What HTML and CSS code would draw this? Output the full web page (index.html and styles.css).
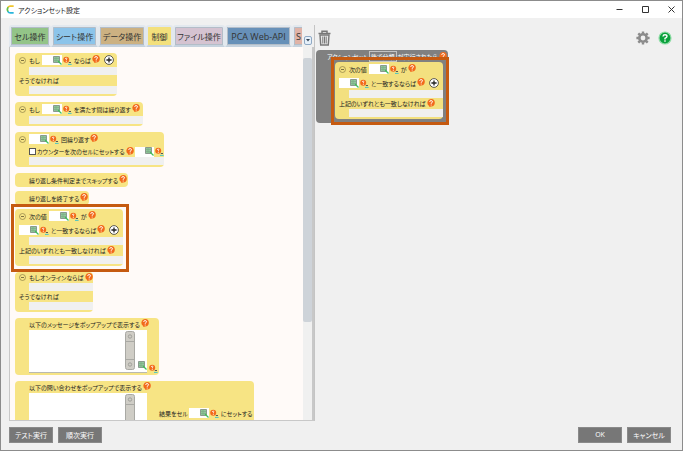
FILE: index.html
```
<!DOCTYPE html>
<html lang="ja">

<head>
    <meta charset="UTF-8">
    <meta name="viewport" content="width=device-width, initial-scale=1.0">
    <title>アクションセット設定</title>
    <link rel="stylesheet" href="styles.css">
</head>

<body>
    <svg class="defs" aria-hidden="true">
        <symbol id="help" viewBox="0 0 9 9">
            <path d="M4.5 0A4.2 4.2 0 0 1 8.8 4.2A4.2 4.2 0 0 1 4.6 8.3L2.6 9L2.5 7.8A4.2 4.2 0 0 1 4.5 0Z" fill="#f26a1b" />
            <path d="M3 3.2Q3.1 1.8 4.6 1.8Q6.2 1.8 6.2 3.1Q6.2 4 4.7 4.7V5.4M4.7 6.3V7.3" fill="none" stroke="#fff" stroke-width="1.1" />
        </symbol>
        <symbol id="type" viewBox="0 0 9 9">
            <circle cx="3.2" cy="3.8" r="3" fill="#f26a1b" />
            <path d="M2.2 3Q2.4 2.1 3.4 2.2Q4.6 2.5 3.4 3.7V4.3M3.3 5V5.8" fill="none" stroke="#fff" stroke-width=".9" />
            <path d="M5.8 6.5H8" stroke="#555" />
            <path d="M5 8.4H8.6" stroke="#48c5c5" />
        </symbol>
        <symbol id="pick" viewBox="0 0 9 9">
            <path d="M.5 .5H6.5V6.5H.5Z" fill="#8fc79a" stroke="#8a9a8e" />
            <path d="M1 2.5H6M1 4.5H6M3 1V6" stroke="#79a783" stroke-width=".6" />
            <path d="M5 5L8.5 8.5" stroke="#3fbf58" stroke-width="1.3" />
        </symbol>
        <symbol id="fold" viewBox="0 0 7 7">
            <circle cx="3.5" cy="3.5" r="3" fill="none" stroke="#8d8045" stroke-width=".7" />
            <path d="M2 3.5H5" stroke="#5f5630" stroke-width=".8" />
        </symbol>
        <symbol id="plus" viewBox="0 0 10 10">
            <circle cx="5" cy="5" r="4.4" fill="#fff" stroke="#333" stroke-width=".8" />
            <path d="M2.4 5H7.6M5 2.4V7.6" stroke="#222" stroke-width="1.3" />
        </symbol>
    </svg>

    <header class="titlebar">
        <svg class="logo" viewBox="0 0 10 10" aria-hidden="true">
            <path d="M8.5 1.2H4.5Q2.8 1.4 2 3" fill="none" stroke="#f0c52c" stroke-width="1.9" />
            <path d="M2.4 2.4Q.6 5 2.4 7.4" fill="none" stroke="#62c04a" stroke-width="1.9" />
            <path d="M2 7Q3 8.8 5 8.8H8.5" fill="none" stroke="#29b5dc" stroke-width="1.9" />
        </svg>
        <h1>アクションセット設定</h1>
        <div class="win-buttons">
            <button aria-label="最小化"><svg viewBox="0 0 7 7"><path d="M.5 3.5H6.5" /></svg></button>
            <button aria-label="最大化"><svg viewBox="0 0 7 7"><path d="M.5 .5H6.5V6.5H.5Z" /></svg></button>
            <button aria-label="閉じる"><svg viewBox="0 0 7 7"><path d="M.5 .5L6.5 6.5M6.5 .5L.5 6.5" /></svg></button>
        </div>
    </header>

    <main>
        <section class="palette">
            <nav class="tabs">
                <div class="tab-strip">
                    <button class="tab cell">セル操作</button>
                    <button class="tab sheet">シート操作</button>
                    <button class="tab data">データ操作</button>
                    <button class="tab control">制御</button>
                    <button class="tab file">ファイル操作</button>
                    <button class="tab api">PCA Web-API</button>
                    <button class="tab sql">S</button>
                </div>
                <button class="tab-more" aria-label="タブ一覧"><svg viewBox="0 0 4 3"><path d="M0 0H4L2 2.5Z" fill="#345" /></svg></button>
            </nav>

            <div class="list">
                <div class="blocks">
                    <div class="block b-if">
                        <div class="row">
                            <svg class="fold"><use href="#fold" /></svg>
                            <span>もし</span>
                            <span class="field"><input type="text" aria-label="条件"><svg><use href="#pick" /></svg></span>
                            <svg class="type"><use href="#type" /></svg>
                            <span>ならば</span>
                            <svg class="help"><use href="#help" /></svg>
                            <svg class="plus"><use href="#plus" /></svg>
                        </div>
                        <div class="slot"></div>
                        <div class="row low">そうでなければ</div>
                        <div class="slot"></div>
                    </div>

                    <div class="block b-while">
                        <div class="row">
                            <svg class="fold"><use href="#fold" /></svg>
                            <span>もし</span>
                            <span class="field"><input type="text" aria-label="繰り返し条件"><svg><use href="#pick" /></svg></span>
                            <svg class="type"><use href="#type" /></svg>
                            <span>を満たす間は繰り返す</span>
                            <svg class="help"><use href="#help" /></svg>
                        </div>
                        <div class="slot"></div>
                    </div>

                    <div class="block b-loop">
                        <div class="row">
                            <svg class="fold"><use href="#fold" /></svg>
                            <span class="field"><input type="text" aria-label="回数"><svg><use href="#pick" /></svg></span>
                            <svg class="type"><use href="#type" /></svg>
                            <span>回繰り返す</span>
                            <svg class="help"><use href="#help" /></svg>
                        </div>
                        <div class="row low indent">
                            <label><input type="checkbox">カウンターを次のセルにセットする</label>
                            <svg class="help"><use href="#help" /></svg>
                            <span class="field"><input type="text" aria-label="カウンターのセル"><svg><use href="#pick" /></svg></span>
                            <svg class="type"><use href="#type" /></svg>
                        </div>
                        <div class="slot"></div>
                    </div>

                    <div class="group">
                        <div class="block single b-skip">
                            <div class="row indent">繰り返し条件判定までスキップする<svg class="help"><use href="#help" /></svg></div>
                        </div>
                        <div class="block single b-break">
                            <div class="row indent">繰り返しを終了する<svg class="help"><use href="#help" /></svg></div>
                        </div>
                        <div class="block b-switch marked">
                            <div class="row">
                                <svg class="fold"><use href="#fold" /></svg>
                                <span>次の値</span>
                                <span class="field"><input type="text" aria-label="値"><svg><use href="#pick" /></svg></span>
                                <svg class="type"><use href="#type" /></svg>
                                <span>が</span>
                                <svg class="help"><use href="#help" /></svg>
                            </div>
                            <div class="row">
                                <span class="field"><input type="text" aria-label="比較する値"><svg><use href="#pick" /></svg></span>
                                <svg class="type"><use href="#type" /></svg>
                                <span>と一致するならば</span>
                                <svg class="help"><use href="#help" /></svg>
                                <svg class="plus"><use href="#plus" /></svg>
                            </div>
                            <div class="slot"></div>
                            <div class="row low">上記のいずれとも一致しなければ<svg class="help"><use href="#help" /></svg></div>
                            <div class="slot"></div>
                        </div>
                    </div>

                    <div class="block b-online">
                        <div class="row low">
                            <svg class="fold"><use href="#fold" /></svg>
                            <span>もしオンラインならば</span>
                            <svg class="help"><use href="#help" /></svg>
                        </div>
                        <div class="slot"></div>
                        <div class="row low">そうでなければ</div>
                        <div class="slot"></div>
                    </div>

                    <div class="block b-message">
                        <div class="row title">以下のメッセージをポップアップで表示する<svg class="help"><use href="#help" /></svg></div>
                        <div class="message">
                            <div class="memo">
                                <textarea aria-label="メッセージ"></textarea>
                                <svg class="bar" viewBox="0 0 10 39"><rect x=".5" y=".5" width="9" height="38" rx="2" fill="#cfcdc6" stroke="#a9a9a4" /><path d="M1 10.5H9M1 28.5H9" stroke="#a9a9a4" /><circle cx="5" cy="5.5" r="1.7" fill="none" stroke="#a0a09a" /><circle cx="5" cy="33.5" r="1.7" fill="none" stroke="#a0a09a" /></svg>
                                <svg class="pick"><use href="#pick" /></svg>
                            </div>
                            <svg class="type"><use href="#type" /></svg>
                        </div>
                    </div>

                    <div class="block b-question">
                        <div class="row title">以下の問い合わせをポップアップで表示する<svg class="help"><use href="#help" /></svg></div>
                        <div class="message">
                            <div class="memo">
                                <textarea aria-label="問い合わせ"></textarea>
                                <svg class="bar" viewBox="0 0 10 39"><rect x=".5" y=".5" width="9" height="38" rx="2" fill="#cfcdc6" stroke="#a9a9a4" /><path d="M1 10.5H9M1 28.5H9" stroke="#a9a9a4" /><circle cx="5" cy="5.5" r="1.7" fill="none" stroke="#a0a09a" /><circle cx="5" cy="33.5" r="1.7" fill="none" stroke="#a0a09a" /></svg>
                            </div>
                            <div class="result">
                                <span>結果をセル</span>
                                <span class="field"><input type="text" aria-label="結果のセル"><svg><use href="#pick" /></svg></span>
                                <svg class="type"><use href="#type" /></svg>
                                <span>にセットする</span>
                            </div>
                        </div>
                    </div>
                </div>
                <div class="scrollbar"><div class="thumb"></div></div>
            </div>
        </section>

        <section class="canvas">
            <div class="tools">
                <button aria-label="削除">
                    <svg class="trash" viewBox="0 0 13 16">
                        <path d="M.5 3.5H12.5M4 3V1.2H9V3" fill="none" stroke="#777" stroke-width="1.5" />
                        <path d="M2 5H11L10.3 15H2.7Z" fill="#e8e8e8" stroke="#777" stroke-width="1.4" />
                        <path d="M4.8 6.5V13.5M6.5 6.5V13.5M8.2 6.5V13.5" stroke="#777" />
                    </svg>
                </button>
                <span class="space"></span>
                <button aria-label="設定">
                    <svg class="gear" viewBox="0 0 14 14">
                        <circle cx="7" cy="7" r="3.7" fill="none" stroke="#8b8b8b" stroke-width="2.6" />
                        <path d="M7 .4V2.6M7 11.4V13.6M.4 7H2.6M11.4 7H13.6M2.3 2.3L3.9 3.9M10.1 10.1L11.7 11.7M2.3 11.7L3.9 10.1M10.1 3.9L11.7 2.3" stroke="#8b8b8b" stroke-width="2.4" />
                    </svg>
                </button>
                <button aria-label="ヘルプ">
                    <svg class="gear" viewBox="0 0 14 14">
                        <circle cx="7" cy="7" r="6" fill="#0aa13c" stroke="#8fdca6" stroke-width="1.2" />
                        <path d="M5 5.5Q5.1 3.7 7 3.7Q9 3.7 9 5.3Q9 6.4 7 7.3V8.4M7 9.3V10.8" fill="none" stroke="#fff" stroke-width="1.4" />
                    </svg>
                </button>
            </div>

            <div class="event">
                <div class="event-head">
                    <span>アクションセット</span>
                    <span class="event-name">後で分類</span>
                    <span>が実行されたら</span>
                    <svg class="help"><use href="#help" /></svg>
                </div>
                <div class="block b-switch marked">
                    <div class="row">
                        <svg class="fold"><use href="#fold" /></svg>
                        <span>次の値</span>
                        <span class="field"><input type="text" aria-label="値"><svg><use href="#pick" /></svg></span>
                        <svg class="type"><use href="#type" /></svg>
                        <span>が</span>
                        <svg class="help"><use href="#help" /></svg>
                    </div>
                    <div class="row">
                        <span class="field"><input type="text" aria-label="比較する値"><svg><use href="#pick" /></svg></span>
                        <svg class="type"><use href="#type" /></svg>
                        <span>と一致するならば</span>
                        <svg class="help"><use href="#help" /></svg>
                        <svg class="plus"><use href="#plus" /></svg>
                    </div>
                    <div class="slot"></div>
                    <div class="row low">上記のいずれとも一致しなければ<svg class="help"><use href="#help" /></svg></div>
                    <div class="slot"></div>
                </div>
            </div>
        </section>
    </main>

    <footer>
        <button>テスト実行</button>
        <button>順次実行</button>
        <span class="space"></span>
        <button>OK</button>
        <button>キャンセル</button>
    </footer>
</body>

</html>
```
FILE: styles.css
```
* {
    box-sizing: border-box;
}

body {
    margin: 0;
    height: 100vh;
    display: flex;
    flex-direction: column;
    border: 1px solid #8c8c8c;
    background-color: #f0f0f0;
    color: #222;
    font-family: "Open Sans", "Noto Sans CJK JP", sans-serif;
    font-size: 6px;
    font-feature-settings: "palt", "kern";
    white-space: nowrap;
}

button,
input,
textarea {
    margin: 0;
    padding: 0;
    border: none;
    background: none;
    font: inherit;
    font-feature-settings: inherit;
}

svg {
    display: block;
    flex: none;
}

.defs {
    position: absolute;
    width: 0;
    height: 0;
}

.space {
    flex: 1;
}

/* title bar */
.titlebar {
    display: flex;
    align-items: center;
    flex: none;
    height: 17px;
    padding: 0 7px 0 5px;
    gap: 3px;
    background-color: #fff;
}

.logo {
    width: 9px;
    height: 9px;
}

.titlebar h1 {
    flex: 1;
    margin: 0;
    font-size: 7px;
    font-weight: normal;
}

.win-buttons {
    display: flex;
    gap: 19px;
}

.win-buttons svg {
    width: 7px;
    height: 7px;
    fill: none;
    stroke: #333;
}

/* main */
main {
    flex: 1;
    display: flex;
    min-height: 0;
    padding: 7px 8px 0;
}

.palette {
    display: flex;
    flex-direction: column;
    width: 46%;
    border-right: 1px solid #c4c4c4;
}

.tabs {
    display: flex;
    align-items: flex-end;
    flex: none;
    height: 22px;
    gap: 2px;
}

.tab-strip {
    display: flex;
    flex: 1;
    min-width: 0;
    height: 22px;
    overflow: hidden;
}

.tab {
    flex: none;
    padding: 0 2px;
    border: 2px solid #e2e8ee;
    border-bottom-color: #c6d2de;
    border-radius: 3px 3px 0 0;
    box-shadow: inset 0 0 0 1px #b3bdc8;
    font-size: 8px;
    color: #333;
}

.cell {
    width: 42px;
    background-color: #93c488;
}

.sheet {
    width: 47px;
    background-color: #8cc4ea;
}

.data {
    width: 48px;
    background-color: #ccb182;
}

.control {
    width: 27px;
    background-color: #f3e07c;
    box-shadow: none;
}

.file {
    width: 52px;
    background-color: #d5c3d1;
}

.api {
    width: 67px;
    font-size: 9px;
    background-color: #6790b8;
}

.sql {
    width: 30px;
    text-align: left;
    font-size: 9px;
    background-color: #e0b3a7;
}

.tab-more {
    display: flex;
    align-items: center;
    justify-content: center;
    width: 8px;
    height: 9px;
    margin: 0 2px 2px 0;
    border: 1px solid #8fa9c4;
    border-radius: 2px;
    background-color: #e6f0fa;
}

.tab-more svg {
    width: 4px;
    height: 3px;
}

.list {
    flex: 1;
    display: flex;
    min-height: 0;
    border: solid #c8c8c8;
    border-width: 0 2px 1px 1px;
    background-color: #fffaf8;
}

.blocks {
    flex: 1;
    display: flex;
    flex-direction: column;
    align-items: flex-start;
    gap: 6px;
    padding: 6px 5px 0;
    overflow: hidden;
}

.scrollbar {
    width: 9px;
    padding-top: 11px;
    background-color: #f0f0f0;
}

.thumb {
    height: 73%;
    border-radius: 2px;
    background-color: #ced3d9;
}

/* blocks */
.block {
    flex: none;
    padding-bottom: 2px;
    border-radius: 4px;
    background-color: #f7e484;
}

.group {
    display: flex;
    flex-direction: column;
    align-items: flex-start;
    flex: none;
    gap: 4px;
}

.single {
    padding-bottom: 0;
}

.b-if {
    width: 102px;
}

.b-while {
    width: 128px;
}

.b-loop {
    width: 149px;
}

.b-skip {
    width: 113px;
}

.b-break {
    width: 74px;
}

.b-switch {
    width: 108px;
}

.b-online {
    width: 78px;
}

.b-message {
    width: 144px;
}

.b-question {
    width: 239px;
}

.row {
    display: flex;
    align-items: center;
    height: 14px;
    padding-left: 4px;
    gap: 1px;
}

.low {
    height: 11px;
}

.indent {
    padding-left: 14px;
}

.title {
    height: 12px;
    padding-left: 14px;
}

.slot {
    height: 8px;
    margin-left: 14px;
    background-color: #f0f0f0;
}

.row label {
    display: flex;
    align-items: center;
    gap: 1px;
}

.row input[type="checkbox"] {
    appearance: none;
    width: 7px;
    height: 7px;
    border: 1px solid #555;
    background-color: #fff;
}

.field {
    display: flex;
    align-items: center;
    width: 20px;
    height: 10px;
    background-color: #fff;
}

.row span + .field {
    margin-left: 1px;
}

.field input {
    flex: 1;
    width: 0;
    height: 10px;
}

.field svg,
.pick {
    width: 9px;
    height: 9px;
}

.fold {
    width: 7px;
    height: 7px;
    margin-right: 2px;
}

.type {
    width: 9px;
    height: 9px;
}

.type + span {
    margin-left: 1px;
}

.help {
    width: 8px;
    height: 8px;
}

.row .help {
    margin-bottom: 2px;
}

.plus {
    width: 10px;
    height: 10px;
    margin-left: 3px;
}

.message {
    display: flex;
    align-items: flex-end;
    gap: 2px;
    margin-left: 14px;
}

.memo {
    display: flex;
    align-items: flex-end;
    flex: none;
    width: 118px;
    height: 43px;
    padding: 2px 0;
    gap: 3px;
    border-bottom: 1px solid #b9b9b0;
    background-color: #fff;
}

.memo textarea {
    flex: 1;
    width: 0;
    height: 38px;
    resize: none;
}

.b-question .memo {
    padding-right: 12px;
}

.bar {
    width: 10px;
    height: 39px;
}

.result {
    display: flex;
    align-items: center;
    gap: 1px;
    margin-left: 10px;
    padding-bottom: 18px;
}

/* orange frame over the block */
.marked {
    position: relative;
}

.marked::after {
    content: "";
    position: absolute;
    inset: -5px -6px -6px -4px;
    border: 3px solid #c55a11;
}

/* canvas */
.canvas {
    flex: 1;
    display: flex;
    flex-direction: column;
    align-items: flex-start;
    padding-left: 1px;
}

.tools {
    display: flex;
    align-items: center;
    align-self: stretch;
    height: 25px;
    padding: 0 2px;
    gap: 8px;
}

.trash {
    width: 13px;
    height: 16px;
}

.gear {
    width: 14px;
    height: 14px;
}

.event {
    padding: 0 5px 4px 19px;
    border-radius: 4px;
    background-color: #808080;
}

.event-head {
    display: flex;
    align-items: center;
    height: 12px;
    color: #fff;
    gap: 1px;
    margin: 0 -4px 0 -8px;
}

.event-name {
    padding: 0 1px;
    border: 1px solid #c4c4c4;
}

.event .block {
    background-color: #f3e07f;
}

/* footer */
footer {
    display: flex;
    flex: none;
    align-items: center;
    height: 29px;
    padding: 0 11px 2px 8px;
    gap: 5px;
}

footer button {
    width: 44px;
    height: 16px;
    border: 1px solid #8a8a8a;
    background-color: #777;
    color: #fff;
    font-size: 7px;
}
```
